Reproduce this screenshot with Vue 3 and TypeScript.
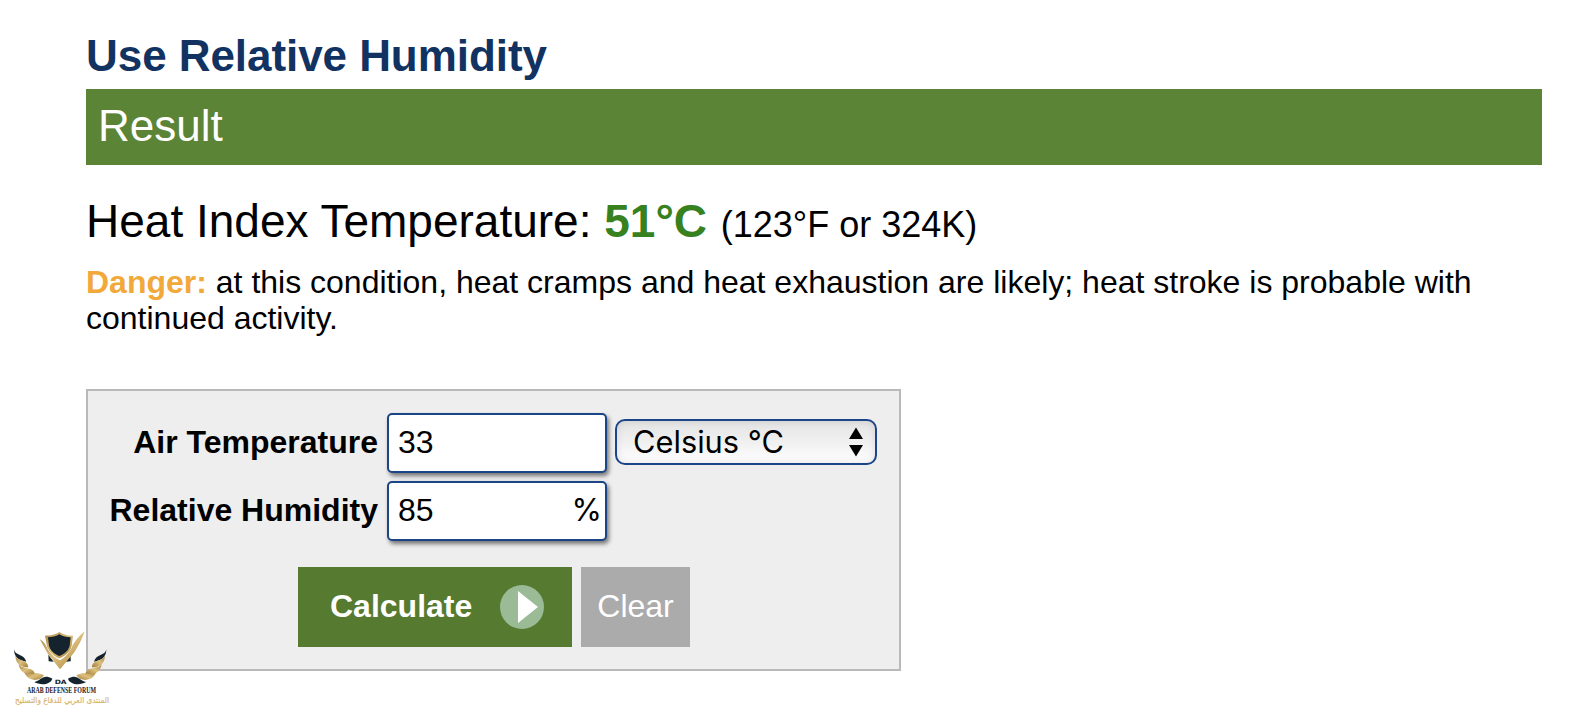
<template>
  <main class="page">
    <h1 class="page__title">Use Relative Humidity</h1>
    <h2 class="page__result">Result</h2>

    <p class="heat-index">
      Heat Index Temperature: <b class="heat-index__value">51°C</b> <span class="heat-index__other">(123°F or 324K)</span>
    </p>
    <p class="warning">
      <b class="warning__level">Danger:</b> at this condition, heat cramps and heat exhaustion are
      likely; heat stroke is probable with continued activity.
    </p>

    <form class="calculator" @submit.prevent>
      <div class="calculator__fields">
        <label for="temperature">Air Temperature</label>
        <div class="field">
          <input id="temperature" v-model="temperature" type="text" />
        </div>
        <div class="unit">
          <select v-model="unit">
            <option v-for="u in units" :key="u" :value="u">{{ u }}</option>
          </select>
          <svg class="unit__arrows" viewBox="0 0 14 30">
            <path d="M7 .5 14 12H0zM0 18h14L7 29.5z" />
          </svg>
        </div>

        <label for="humidity">Relative Humidity</label>
        <div class="field">
          <input id="humidity" v-model="humidity" type="text" />
          <span class="field__suffix">%</span>
        </div>
      </div>

      <div class="calculator__actions">
        <button class="button button--primary" type="submit">
          <span>Calculate</span>
          <svg class="button__icon" viewBox="0 0 44 44">
            <circle cx="22" cy="22" r="22" fill="#9abb96" />
            <path d="M18 6v32l20-16z" fill="#fff" />
          </svg>
        </button>
        <button class="button button--clear" type="button" @click="clear">Clear</button>
      </div>
    </form>

    <svg class="watermark" viewBox="30 24 312 240">
      <defs>
        <linearGradient id="gold" x1="0" y1="0" x2="1" y2="1">
          <stop offset="0" stop-color="#a78343" />
          <stop offset=".5" stop-color="#dcc07c" />
          <stop offset="1" stop-color="#a17b36" />
        </linearGradient>
      </defs>
      <!-- crossed blades -->
      <path d="M145 104l16 21-15-1zM212 104l-15 21 15-1z" fill="#14232d" />
      <path d="M119 57c13 8 20 20 27 34 8 14 20 24 34 30 13-7 23-18 30-31 11-22 25-41 44-56-8 24-19 44-32 64l-42 50-36-46z" fill="url(#gold)" />
      <!-- shield -->
      <path d="M178 36c12 8 24 11 41 11l-4 31c-5 18-19 30-37 37-18-7-32-19-37-37l-6-31c19 0 31-3 43-11z" fill="url(#gold)" stroke="#fff" stroke-width="3" paint-order="stroke" />
      <path d="M178 43c11 7 21 9 34 9l-3 25c-4 15-16 25-31 31-15-6-27-16-31-31l-3-25c13 0 23-2 34-9z" fill="#14232d" />
      <!-- wings -->
      <g id="wing">
        <path d="M42 88c3 20 31 14 37 37-23-3-37-14-37-37z" fill="#14232d" />
        <path d="M46 105c5 21 37 11 39 37-24 1-39-12-39-37z" fill="url(#gold)" />
        <path d="M56 132c9 18 44 6 49 30-24 4-46-4-49-30z" fill="url(#gold)" />
        <path d="M73 157c17 14 30-7 59 9-13 21-50 18-59-9z" fill="url(#gold)" />
        <path d="M103 186c20-3 25-26 54-10-5 18-36 21-54 10z" fill="#14232d" />
      </g>
      <use href="#wing" transform="matrix(-1 0 0 1 361 0)" />
      <text x="164" y="193" textLength="36" lengthAdjust="spacingAndGlyphs" class="watermark__initials">DA</text>
      <text x="81" y="219" textLength="207" lengthAdjust="spacingAndGlyphs" class="watermark__name">ARAB DEFENSE FORUM</text>
      <text x="186" y="249" text-anchor="middle" textLength="282" lengthAdjust="spacingAndGlyphs" class="watermark__arabic">المنتدى العربي للدفاع والتسليح</text>
    </svg>
  </main>
</template>

<script lang="ts" setup>
import { ref } from "vue";

const units = ["Celsius °C", "Fahrenheit °F"];

const temperature = ref("33");
const humidity = ref("85");
const unit = ref(units[0]);

const clear = () => {
  temperature.value = "";
  humidity.value = "";
};
</script>

<style>
body {
  background: #fff;
}
</style>

<style scoped>
.page {
  position: relative;
  box-sizing: border-box;
  height: 708px;
  padding: 31px 36px 0 86px;
  overflow: hidden;
  color: #000;
  font-family: "Liberation Sans", Arial, sans-serif;
  font-size: 32px;
  line-height: 36px;
}

.page__title {
  margin: 0 0 8px;
  color: #123262;
  font-size: 44px;
  letter-spacing: -0.06px;
  line-height: 50px;
}

.page__result {
  margin: 0 0 30px;
  padding: 0 12px 3px;
  background: #5c8436;
  color: #fff;
  font-size: 44px;
  font-weight: normal;
  line-height: 73px;
}

.heat-index {
  margin: 0 0 17px;
  font-size: 46px;
  line-height: 52px;
}

.heat-index__value {
  color: #37811f;
}

.heat-index__other {
  margin-left: 1px;
  font-size: 36px;
  line-height: 1;
}

.warning {
  margin: 0 0 53px;
}

.warning__level {
  color: #f2a93b;
}

.calculator {
  box-sizing: border-box;
  width: 815px;
  padding: 22px 21px;
  border: 2px solid #b9b9b9;
  background: #eee;
}

.calculator__fields {
  display: grid;
  grid-template-columns: 270px 220px 262px;
  column-gap: 8px;
  row-gap: 8px;
  align-items: center;
  margin-bottom: 26px;
}

.calculator__fields label {
  padding: 0 1px 2px 0;
  font-weight: bold;
  text-align: right;
  white-space: nowrap;
}

.field {
  display: flex;
  align-items: center;
  box-sizing: border-box;
  height: 60px;
  padding: 0 4px 2px 9px;
  border: 2px solid #1c4587;
  border-radius: 5px;
  background: #fff;
  box-shadow: 2px 3px 4px rgba(0, 0, 0, 0.5);
}

.field input {
  flex: 1;
  min-width: 0;
  padding: 0;
  border: 0;
  outline: 0;
  background: none;
  color: #000;
  font: inherit;
}

.field__suffix {
  font-family: Inter, sans-serif;
  font-size: 31px;
  letter-spacing: -1px;
}

.unit {
  position: relative;
  height: 46px;
  margin-bottom: 2px;
}

.unit select {
  display: block;
  width: 100%;
  height: 46px;
  padding: 0 16px;
  border: 2px solid #1c4587;
  border-radius: 10px;
  appearance: none;
  background: linear-gradient(#e4e4e4, #f0f0f0 50%, #fff);
  box-shadow: inset 0 0 9px rgba(0, 0, 0, 0.1);
  color: #000;
  font-family: Inter, sans-serif;
  font-size: 30.8px;
  line-height: 40px;
}

.unit__arrows {
  position: absolute;
  top: 8px;
  right: 14px;
  width: 14px;
  height: 30px;
}

.calculator__actions {
  display: flex;
  gap: 9px;
  padding-left: 189px;
}

.button {
  height: 80px;
  padding: 0 0 3px;
  border: 0;
  color: #fff;
  font: inherit;
}

.button--primary {
  display: flex;
  align-items: center;
  justify-content: space-between;
  width: 274px;
  padding: 0 28px 0 32px;
  background: #557a30;
  font-weight: bold;
}

.button--primary span {
  padding-bottom: 2px;
}

.button__icon {
  width: 44px;
  height: 44px;
}

.button--clear {
  width: 109px;
  background: #ababab;
}

.watermark {
  position: absolute;
  top: 628px;
  left: 10px;
  width: 104px;
  height: 80px;
}

.watermark__initials {
  fill: #14232d;
  font: bold 18px "DejaVu Sans", sans-serif;
}

.watermark__name {
  fill: #14232d;
  font: bold 22px "Liberation Serif", serif;
}

.watermark__arabic {
  fill: #d8b46c;
  stroke: #d8b46c;
  stroke-width: 0.5;
  font: 25px "DejaVu Sans", sans-serif;
}
</style>
